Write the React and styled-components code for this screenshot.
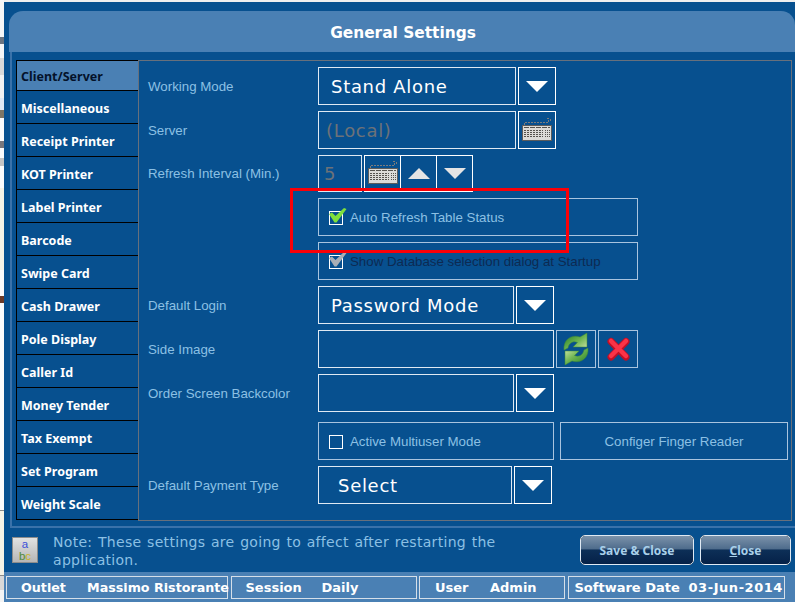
import styled, { createGlobalStyle } from 'styled-components';

const BLUE = '#07508f';
const STEEL = '#4a80b4';
const LABEL = '#8cc0e4';

const MENU = [
  'Client/Server',
  'Miscellaneous',
  'Receipt Printer',
  'KOT Printer',
  'Label Printer',
  'Barcode',
  'Swipe Card',
  'Cash Drawer',
  'Pole Display',
  'Caller Id',
  'Money Tender',
  'Tax Exempt',
  'Set Program',
  'Weight Scale',
];

const KEY_ROWS = [
  { y: 9.5, dash: '5 1', x1: 2, x2: 28 },
  { y: 12.5, dash: '2 1', x1: 2, x2: 21 },
  { y: 14.5, dash: '2 1', x1: 2, x2: 21 },
  { y: 16.5, dash: '2 1', x1: 2, x2: 21 },
  { y: 18.5, dash: '2 1', x1: 2, x2: 21 },
  { y: 12.5, dash: '1 1', x1: 23, x2: 28 },
  { y: 14.5, dash: '1 1', x1: 23, x2: 28 },
  { y: 16.5, dash: '1 1', x1: 23, x2: 28 },
  { y: 18.5, dash: '1 1', x1: 23, x2: 28 },
];

function KeyboardIcon() {
  return (
    <KeyboardSvg width="30" height="23" viewBox="0 0 30 23" shapeRendering="crispEdges">
      <path
        d="M2.5 7V4.5H26.5V1.5M25 0.5H27.5M28.5 1V3.5"
        fill="none"
        stroke="#7c7c7c"
        strokeDasharray="2 1"
      />
      <rect x="0.5" y="7.5" width="29" height="15" fill="#dcdbd7" stroke="#5c5c5c" />
      {KEY_ROWS.map((row, i) => (
        <line
          key={i}
          x1={row.x1}
          x2={row.x2}
          y1={row.y}
          y2={row.y}
          stroke="#55534e"
          strokeDasharray={row.dash}
        />
      ))}
    </KeyboardSvg>
  );
}

function RefreshIcon() {
  const arrow = 'M1 17C0 7 8 1 17 4L24 0V14H10L14.5 9.5C10 7.5 6 10 5 15Z';
  return (
    <svg width="26" height="32" viewBox="0 0 26 32">
      <defs>
        <linearGradient id="syncTop" x1="0" y1="0" x2="1" y2="1">
          <stop offset="0" stopColor="#1f7d25" />
          <stop offset="0.55" stopColor="#6fb552" />
          <stop offset="1" stopColor="#d3e8ae" />
        </linearGradient>
      </defs>
      <path d={arrow} fill="url(#syncTop)" stroke="#3f8a35" strokeWidth="0.5" />
      <path
        d={arrow}
        fill="url(#syncTop)"
        stroke="#3f8a35"
        strokeWidth="0.5"
        transform="rotate(180 13 16)"
      />
    </svg>
  );
}

function CrossIcon() {
  return (
    <svg width="23" height="24" viewBox="0 0 23 24">
      <path d="M4 4.5L19 20M19 4.5L4 20" stroke="#c10f26" strokeWidth="7" strokeLinecap="round" />
      <path d="M4 4L19 19M19 4L4 19" stroke="#fb3347" strokeWidth="4.5" strokeLinecap="round" />
    </svg>
  );
}

function CheckMark({ color }) {
  return (
    <svg width="18" height="15" viewBox="0 0 18 15">
      <path d="M0 6L3 4.5L6.5 8L15 0L17.5 1L7.5 14.5H5.5Z" fill={color} />
    </svg>
  );
}

function Dropdown({ width, pad, children }) {
  return (
    <>
      <Field $width={width} $pad={pad}>
        {children}
      </Field>
      <SquareButton $width={38}>
        <Triangle />
      </SquareButton>
    </>
  );
}

function CheckGroup({ width, color, dark, children }) {
  return (
    <Group $width={width}>
      <CheckBox>
        {color && (
          <CheckSlot>
            <CheckMark color={color} />
          </CheckSlot>
        )}
      </CheckBox>
      <GroupText $dark={dark}>{children}</GroupText>
    </Group>
  );
}

export default function App() {
  return (
    <Page>
      <GlobalStyle />
      <DesktopEdge />
      <Column>
        <DesktopTop />
        <Dialog>
          <TitleBar>General Settings</TitleBar>
          <Frame>
            <Sidebar>
              {MENU.map((item, i) => (
                <MenuItem key={item} $active={i === 0}>
                  {item}
                </MenuItem>
              ))}
            </Sidebar>
            <Panel>
              <Row>
                <Label>Working Mode</Label>
                <Dropdown width={198} pad={12}>
                  Stand Alone
                </Dropdown>
              </Row>
              <Row>
                <Label>Server</Label>
                <Field $width={198} $pad={7} $muted>
                  (Local)
                </Field>
                <SquareButton $width={38}>
                  <KeyboardIcon />
                </SquareButton>
              </Row>
              <Row $height={37}>
                <Label>Refresh Interval (Min.)</Label>
                <Field $width={44} $pad={5} $muted>
                  5
                </Field>
                <Joined>
                  <JoinedButton>
                    <KeyboardIcon />
                  </JoinedButton>
                  <JoinedButton>
                    <Triangle $up $dim />
                  </JoinedButton>
                  <JoinedButton>
                    <Triangle $dim />
                  </JoinedButton>
                </Joined>
              </Row>
              <Row>
                <Label />
                <CheckGroup width={320} color="#7ee03c">
                  Auto Refresh Table Status
                </CheckGroup>
              </Row>
              <Row>
                <Label />
                <CheckGroup width={320} color="#a8aeb6" dark>
                  Show Database selection dialog at Startup
                </CheckGroup>
              </Row>
              <Row>
                <Label>Default Login</Label>
                <Dropdown width={196} pad={12}>
                  Password Mode
                </Dropdown>
              </Row>
              <Row>
                <Label>Side Image</Label>
                <Field $width={236} />
                <IconButton>
                  <RefreshIcon />
                </IconButton>
                <IconButton>
                  <CrossIcon />
                </IconButton>
              </Row>
              <Row>
                <Label>Order Screen Backcolor</Label>
                <Dropdown width={196} pad={12} />
              </Row>
              <Row $spaced>
                <Label />
                <CheckGroup width={236}>Active Multiuser Mode</CheckGroup>
                <FingerButton>Configer Finger Reader</FingerButton>
              </Row>
              <Row>
                <Label>Default Payment Type</Label>
                <Dropdown width={194} pad={19}>
                  Select
                </Dropdown>
              </Row>
            </Panel>
          </Frame>
          <Footer>
            <NoteTile>
              <NoteA>a</NoteA>
              <NoteLetters>
                <NoteB>b</NoteB>
                <NoteC>c</NoteC>
              </NoteLetters>
            </NoteTile>
            <NoteText>
              Note: These settings are going to affect after restarting the application.
            </NoteText>
            <ActionButton $width={114}>Save &amp; Close</ActionButton>
            <ActionButton $width={91}>
              <u>C</u>lose
            </ActionButton>
          </Footer>
          <StatusBar>
            <StatusCell $width={222} $pad={14} $size={12.7}>
              <StatusName $width={66}>Outlet</StatusName>
              <span>Massimo Ristorante</span>
            </StatusCell>
            <StatusCell $width={186} $pad={14}>
              <StatusName $width={76}>Session</StatusName>
              <span>Daily</span>
            </StatusCell>
            <StatusCell $width={146} $pad={15}>
              <StatusName $width={55}>User</StatusName>
              <span>Admin</span>
            </StatusCell>
            <StatusCell $width={217} $pad={6}>
              <StatusName $width={114}>Software Date</StatusName>
              <StatusDate>03-Jun-2014</StatusDate>
            </StatusCell>
          </StatusBar>
        </Dialog>
      </Column>
      <Highlight />
    </Page>
  );
}

const GlobalStyle = createGlobalStyle`
  html, body {
    margin: 0;
    background: #fff;
    overflow: hidden;
  }
`;

const Page = styled.div`
  position: relative;
  width: 795px;
  height: 602px;
  display: flex;
  overflow: hidden;
  font-family: 'DejaVu Sans', sans-serif;
`;

const DesktopEdge = styled.div`
  width: 4px;
  flex: none;
  background: linear-gradient(
    to bottom,
    #f6f6f6 0 37px,
    #6b7480 37px 44px,
    #f6f6f6 44px 58px,
    #d9d9d9 58px 75px,
    #f2f2f2 75px 98px,
    #dfe9f5 98px 110px,
    #7d7666 110px 118px,
    #fbfbfb 118px 141px,
    #77777d 141px 148px,
    #fbfbfb 148px 158px,
    #c4c4c4 158px 166px,
    #fbfbfb 166px 188px,
    #f6f3e6 188px 270px,
    #fbfbfb 270px 296px,
    #6b3a28 296px 303px,
    #fbfbfb 303px 510px,
    #8a8a8a 510px 511px,
    #f6f3e6 511px 575px,
    #8a8a8a 575px 576px,
    #d8d8d8 576px 590px,
    #f4f4f4 590px 602px
  );
`;

const Column = styled.div`
  flex: 1;
  min-width: 0;
  display: flex;
  flex-direction: column;
`;

const DesktopTop = styled.div`
  height: 2px;
  flex: none;
  background: #eeeeee;
`;

const Dialog = styled.div`
  flex: 1;
  display: flex;
  flex-direction: column;
  padding-top: 9px;
  background: ${BLUE};
`;

const TitleBar = styled.div`
  box-sizing: border-box;
  height: 41px;
  margin-left: 5px;
  flex: none;
  display: flex;
  align-items: center;
  justify-content: center;
  padding: 2px 0 0 2px;
  border-radius: 14px 14px 0 0;
  background: ${STEEL};
  color: #fff;
  font-size: 15.4px;
  font-weight: 700;
`;

const Frame = styled.div`
  height: 476px;
  margin-left: 6px;
  flex: none;
  box-sizing: border-box;
  display: flex;
  align-items: flex-start;
  padding: 8px 0 0 4px;
  border-left: 2px solid #3a72aa;
  border-bottom: 2px solid #3a72aa;
`;

const Sidebar = styled.div`
  width: 122px;
  flex: none;
  box-sizing: border-box;
  border-left: 1px solid #000;
  border-top: 1px solid #000;
`;

const MenuItem = styled.div`
  box-sizing: border-box;
  height: ${props => (props.$active ? '30px' : '33px')};
  display: flex;
  align-items: center;
  padding: 2px 0 0 4px;
  border-bottom: 1px solid #000;
  background: ${props => (props.$active ? STEEL : 'transparent')};
  color: ${props => (props.$active ? '#04122a' : '#fff')};
  font-family: 'Noto Sans', sans-serif;
  font-size: 12.5px;
  font-weight: 700;
`;

const Panel = styled.div`
  width: 654px;
  height: 461px;
  flex: none;
  box-sizing: border-box;
  display: flex;
  flex-direction: column;
  gap: 6px;
  padding: 6px 0 0 9px;
  border: 1px solid #67707c;
`;

const Row = styled.div`
  height: ${props => props.$height || 38}px;
  margin-top: ${props => (props.$spaced ? '4px' : '0')};
  flex: none;
  display: flex;
  align-items: stretch;
  gap: 2px;
`;

const Label = styled.div`
  width: 168px;
  flex: none;
  display: flex;
  align-items: center;
  color: ${LABEL};
  font-family: 'Liberation Sans', sans-serif;
  font-size: 13.3px;
`;

const Field = styled.div`
  width: ${props => props.$width}px;
  flex: none;
  box-sizing: border-box;
  display: flex;
  align-items: center;
  padding-left: ${props => props.$pad || 0}px;
  border: 1px solid #dfe9f3;
  color: ${props => (props.$muted ? '#6d7278' : '#fff')};
  font-size: 18px;
  letter-spacing: 0.7px;
`;

const SquareButton = styled.div`
  width: ${props => props.$width}px;
  flex: none;
  box-sizing: border-box;
  display: flex;
  align-items: center;
  justify-content: center;
  border: 1px solid #fff;
`;

const KeyboardSvg = styled.svg`
  margin-bottom: 2px;
`;

const IconButton = styled(SquareButton)`
  width: 40px;
  border-color: #a9c4df;
`;

const Joined = styled.div`
  display: flex;
`;

const JoinedButton = styled(SquareButton)`
  width: 37px;
  margin-right: -1px;
  &:last-child {
    margin-right: 0;
  }
`;

const Triangle = styled.div`
  width: 0;
  height: 0;
  border-left: 11px solid transparent;
  border-right: 11px solid transparent;
  border-top: ${props => (props.$up ? '0' : `11px solid ${props.$dim ? '#e4e4e4' : '#fff'}`)};
  border-bottom: ${props => (props.$up ? `11px solid ${props.$dim ? '#e4e4e4' : '#fff'}` : '0')};
`;

const Group = styled.div`
  width: ${props => props.$width}px;
  flex: none;
  box-sizing: border-box;
  display: flex;
  align-items: center;
  gap: 7px;
  padding-left: 10px;
  border: 1px solid #a9c4df;
`;

const CheckBox = styled.div`
  position: relative;
  width: 14px;
  height: 14px;
  margin-top: 2px;
  flex: none;
  box-sizing: border-box;
  border: 1px solid #fff;
`;

const CheckSlot = styled.div`
  position: absolute;
  left: -1px;
  top: -4px;
  line-height: 0;
`;

const GroupText = styled.span`
  color: ${props => (props.$dark ? '#0d2a52' : LABEL)};
  font-family: 'Liberation Sans', sans-serif;
  font-size: 13.3px;
`;

const FingerButton = styled(SquareButton)`
  width: 228px;
  margin-left: 4px;
  border-color: #a9c4df;
  color: ${LABEL};
  font-family: 'Liberation Sans', sans-serif;
  font-size: 13.3px;
`;

const Footer = styled.div`
  height: 44px;
  flex: none;
  display: flex;
  align-items: center;
  padding: 0 4px 0 8px;
`;

const NoteTile = styled.div`
  width: 26px;
  height: 26px;
  flex: none;
  box-sizing: border-box;
  display: flex;
  flex-direction: column;
  align-items: center;
  border: 1px solid #8c8c8c;
  background: linear-gradient(#e2e2e2, #b6b6b6);
  font-family: 'Liberation Sans', sans-serif;
  font-size: 11.5px;
  line-height: 12px;
`;

const NoteA = styled.span`
  color: #3a50d8;
`;

const NoteLetters = styled.div`
  display: flex;
`;

const NoteB = styled.span`
  color: #4f8a38;
`;

const NoteC = styled.span`
  color: #c8b428;
`;

const NoteText = styled.div`
  width: 470px;
  margin: 1px auto 0 15px;
  color: ${LABEL};
  font-size: 14px;
  line-height: 18px;
  letter-spacing: 0.3px;
  word-spacing: 0.9px;
`;

const ActionButton = styled.div`
  width: ${props => props.$width}px;
  height: 30px;
  margin-left: 6px;
  flex: none;
  box-sizing: border-box;
  display: flex;
  align-items: center;
  justify-content: center;
  border: 1px solid #000;
  border-radius: 5px;
  outline: 1px solid #dfe9f3;
  outline-offset: -1px;
  background: linear-gradient(#7b92aa 0%, #4e6c8c 46%, #0d2f57 50%, #052148 100%);
  color: #a9d0ea;
  font-family: 'Noto Sans', sans-serif;
  font-size: 12px;
  font-weight: 700;
`;

const StatusBar = styled.div`
  flex: 1;
  display: flex;
  align-items: flex-start;
  gap: 2.5px;
  padding: 4px 0 0 2px;
  background: ${STEEL};
`;

const StatusCell = styled.div`
  width: ${props => props.$width}px;
  height: 22.5px;
  flex: none;
  box-sizing: border-box;
  display: flex;
  align-items: center;
  padding-left: ${props => props.$pad}px;
  border: 1px solid #d5dfe9;
  white-space: nowrap;
  color: #fff;
  font-size: ${props => props.$size || 13}px;
  font-weight: 700;
`;

const StatusName = styled.span`
  width: ${props => props.$width}px;
  flex: none;
`;

const StatusDate = styled.span`
  letter-spacing: 0.55px;
`;

const Highlight = styled.div`
  position: absolute;
  left: 290px;
  top: 188px;
  width: 279px;
  height: 65px;
  box-sizing: border-box;
  border: 3px solid #fb0007;
  pointer-events: none;
`;
